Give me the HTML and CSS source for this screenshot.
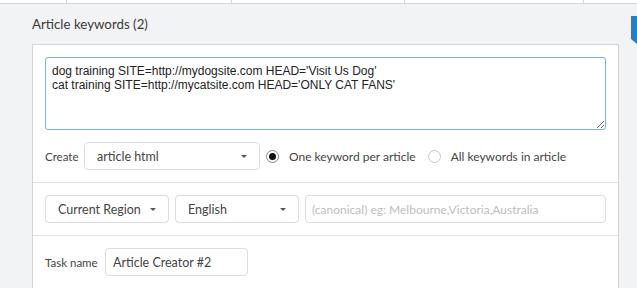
FILE: index.html
```
<!DOCTYPE html>
<html lang="en">
<head>
    <meta charset="UTF-8">
    <meta name="viewport" content="width=device-width, initial-scale=1.0">
    <title>Article Creator</title>
    <link rel="stylesheet" href="styles.css">
</head>
<body>

    <nav class="tab-strip">
        <span class="tab t1"></span>
        <span class="tab t2"></span>
        <span class="tab t3"></span>
        <span class="tab t4"></span>
        <span class="tab t5"></span>
    </nav>

    <span class="side-flag"></span>

    <main class="page">
        <h1 class="page-title">Article keywords (2)</h1>

        <div class="panel">
            <section class="panel-section">
                <textarea class="keywords" spellcheck="false">dog training SITE=http://mydogsite.com HEAD='Visit Us Dog'
cat training SITE=http://mycatsite.com HEAD='ONLY CAT FANS'</textarea>

                <div class="row create-row">
                    <span class="row-label">Create</span>
                    <div class="select select-create">
                        <span>article html</span>
                        <i class="caret"></i>
                    </div>
                    <label class="radio checked"><i class="radio-dot"></i>One keyword per article</label>
                    <label class="radio"><i class="radio-dot"></i>All keywords in article</label>
                </div>
            </section>

            <section class="panel-section">
                <div class="row">
                    <div class="select select-small">
                        <span>Current Region</span>
                        <i class="caret"></i>
                    </div>
                    <div class="select select-small">
                        <span>English</span>
                        <i class="caret"></i>
                    </div>
                    <input class="text-input location" type="text" placeholder="(canonical) eg: Melbourne,Victoria,Australia">
                </div>
            </section>

            <section class="panel-section last">
                <div class="row">
                    <span class="row-label task-label">Task name</span>
                    <input class="text-input task-name" type="text" value="Article Creator #2">
                </div>
            </section>
        </div>
    </main>

</body>
</html>
```
FILE: styles.css
```
:root {
    --page-bg: #f2f3f5;
    --panel-bg: #ffffff;
    --border: #d4d4d4;
    --line: #e2e2e2;
    --field-border: #dcdcdc;
    --focus-border: #7fb0dc;
    --text: #333333;
    --placeholder: #bdbdbd;
    --accent: #1f80d0;
    --font-family: 'Lato', 'Open Sans', sans-serif;
}
*, *::before, *::after { box-sizing: border-box; }
body { margin: 0; font-family: var(--font-family); background-color: var(--page-bg); color: var(--text); font-size: 12px; overflow: hidden; height: 288px; position: relative; }

.tab-strip { display: flex; height: 4px; background: #fff; border-bottom: 1px solid #d6d6d6; }
.tab { border-right: 1px solid #d6d6d6; height: 3px; }
.t1 { width: 67px; }
.t2 { width: 165px; }
.t3 { width: 173px; }
.t4 { width: 179px; }
.t5 { flex-grow: 1; border-right: none; }

.side-flag { position: absolute; left: 631px; top: 16px; width: 6px; height: 28px; background: var(--accent); clip-path: polygon(0 0, 100% 0, 100% 100%, 0 82%); }

.page { padding: 0 18px 0 32px; }
.page-title { font-size: 13.3px; font-weight: 400; color: #3a3a3a; margin: 0; padding: 12px 0 11px 0; line-height: 17px; }

.panel { background: var(--panel-bg); border: 1px solid var(--border); border-bottom: none; height: 244px; }
.panel-section { padding: 12px; border-bottom: 1px solid var(--line); }
.panel-section.last { border-bottom: none; }

.keywords {
    display: block; width: 100%; height: 73px; margin: 0 0 12px 0;
    padding: 6px 6px; border: 1px solid var(--focus-border); border-radius: 3px;
    font-family: 'Liberation Sans', Arial, sans-serif; font-size: 12px; line-height: 14px;
    color: #222; resize: both; outline: none;
}

.row { display: flex; align-items: center; gap: 6px; }
.row-label { font-size: 11.5px; color: #444; white-space: nowrap; flex-shrink: 0; }
.create-row .row-label { width: 33px; }

.select {
    display: flex; align-items: center; justify-content: space-between;
    height: 28px; padding: 0 12px; border: 1px solid var(--field-border); border-radius: 4px;
    color: #444; font-size: 12.5px; background: #fff; flex-shrink: 0;
}
.select-create { width: 176px; }
.select-small { width: 124px; }
.caret { width: 0; height: 0; border-left: 3px solid transparent; border-right: 3px solid transparent; border-top: 3px solid #555; }

.radio { display: flex; align-items: center; gap: 10px; font-size: 12px; color: #444; white-space: nowrap; }
.radio + .radio { margin-left: 6px; }
.radio-dot { width: 13px; height: 13px; border: 1px solid #c8c8c8; border-radius: 50%; display: flex; align-items: center; justify-content: center; }
.radio.checked .radio-dot { border-color: #8a8a8a; }
.radio.checked .radio-dot::after { content: ""; width: 7px; height: 7px; border-radius: 50%; background: #111; }

.text-input {
    height: 28px; border: 1px solid var(--field-border); border-radius: 4px;
    font-family: var(--font-family); color: #444; outline: none; background: #fff;
}
.text-input::placeholder { color: var(--placeholder); }
.location { flex-grow: 1; padding: 0 6px; font-size: 12px; }
.task-label { width: 51px; margin-right: 3px; }
.task-name { width: 143px; padding: 0 7px; font-size: 12.5px; }
```
